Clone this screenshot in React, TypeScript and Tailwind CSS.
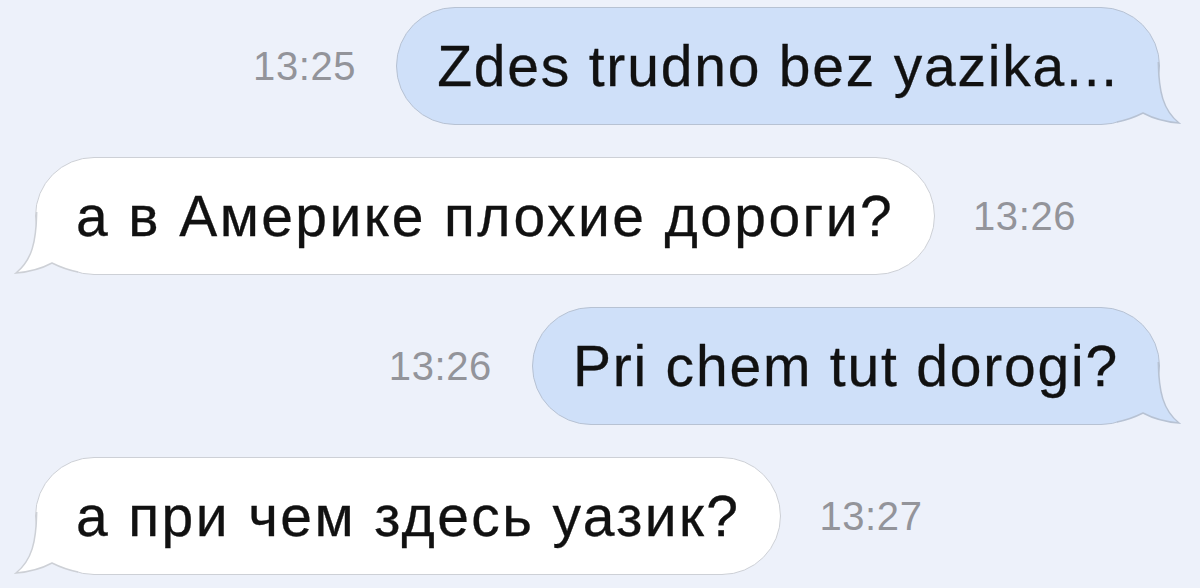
const font = { fontFamily: '"Liberation Sans", Arial, sans-serif' };

type Side = 'out' | 'in';

// iMessage-style tail, drawn on the bottom corner of the bubble
const Tail = ({ side }: { side: Side }) => {
    const fill = side === 'out' ? '#cfe0f9' : '#ffffff';
    const stroke = side === 'out' ? '#b7c2d3' : '#cdd0d6';
    return (
        <svg
            width="80"
            height="70"
            viewBox="0 0 80 70"
            className={
                side === 'out'
                    ? 'absolute right-[-22px] bottom-0 z-10'
                    : 'absolute left-[-22px] bottom-0 z-10 -scale-x-100'
            }
        >
            <path
                d="M57 8 C57.5 38 62 56 78 69 C66 68 55 66 42 59 C34 63 26 66 16 68 L16 40 Z"
                fill={fill}
            />
            <path
                d="M57.3 8 C57.8 38 62 56 78 69 C66 68 55 66 42 59 C34 63 26 66 16 68"
                fill="none"
                stroke={stroke}
                strokeWidth="1.5"
            />
        </svg>
    );
};

const Bubble = ({ text, side }: { text: string; side: Side }) => (
    <div
        className={
            'relative h-[118px] rounded-full border-[1.5px] flex items-center px-10 ' +
            (side === 'out'
                ? 'bg-[#cfe0f9] border-[#b7c2d3]'
                : 'bg-white border-[#cdd0d6]')
        }
    >
        <span
            className={
                'relative z-20 text-[57px] leading-none text-[#111] whitespace-nowrap [-webkit-text-stroke:0.3px_#111] ' +
                (side === 'out' ? 'tracking-[1.8px]' : 'tracking-[2.4px]')
            }
            style={font}
        >
            {text}
        </span>
        <Tail side={side} />
    </div>
);

const Time = ({ value }: { value: string }) => (
    <span
        className="text-[40px] leading-none text-[#93949a] tracking-[0.6px]"
        style={font}
    >
        {value}
    </span>
);

const messages: { text: string; time: string; side: Side }[] = [
    { text: 'Zdes trudno bez yazika...', time: '13:25', side: 'out' },
    { text: 'а в Америке плохие дороги?', time: '13:26', side: 'in' },
    { text: 'Pri chem tut dorogi?', time: '13:26', side: 'out' },
    { text: 'а при чем здесь уазик?', time: '13:27', side: 'in' },
];

export default function App() {
    return (
        <div className="w-full h-[588px] overflow-hidden bg-[#edf1fa] flex flex-col gap-8 pt-[7px]">
            {messages.map((m, i) =>
                m.side === 'out' ? (
                    <div key={i} className="flex items-center justify-end gap-10 pr-10">
                        <Time value={m.time} />
                        <Bubble text={m.text} side="out" />
                    </div>
                ) : (
                    <div key={i} className="flex items-center justify-start gap-[38px] pl-[35px]">
                        <Bubble text={m.text} side="in" />
                        <Time value={m.time} />
                    </div>
                )
            )}
        </div>
    );
}
